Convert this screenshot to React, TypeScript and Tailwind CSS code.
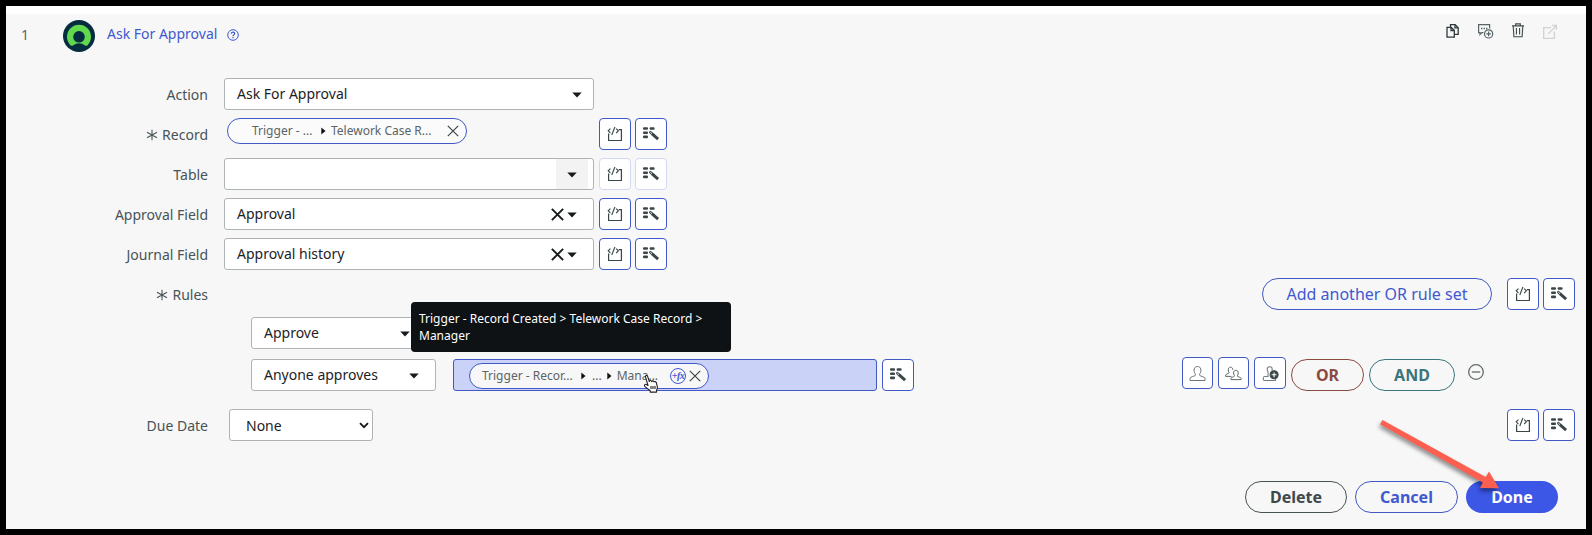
import React from "react";

function ScriptIcon() {
  return (
    <svg width="16" height="16" viewBox="0 0 16 16" fill="none" stroke="#3b4648" strokeWidth="1.2">
      <path d="M1.6 7.500v7h12.800V3.600h-2.600" />
      <path d="M3.400 2.600 1.200 4.800l2.200 2.200M9.200 2.600l2.200 2.200-2.200 2.200M7.900 1 4.800 9" strokeWidth="1.1" />
    </svg>
  );
}

function WandIcon() {
  return (
    <svg width="18" height="16" viewBox="0 0 18 16" fill="#3b4648">
      <rect x="1" y="1.2" width="5" height="2.6" rx="1" />
      <rect x="7.6" y="1.2" width="5" height="2.6" rx="1" />
      <rect x="1" y="5.4" width="5" height="2.6" rx="1" />
      <rect x="1" y="9.6" width="5" height="2.6" rx="1" />
      <path d="m9.900 7.600 6.200 5.600" stroke="#3b4648" strokeWidth="3" />
      <path d="m8.400 6.200 1.400 1.300" stroke="#3b4648" strokeWidth="2.6" strokeLinecap="round" />
      <path d="m8.700 6.500.9.8" stroke="#fff" strokeWidth="1" strokeLinecap="round" />
    </svg>
  );
}

function Square({ children, muted = false, w = "w-8" }: { children: React.ReactNode; muted?: boolean; w?: string }) {
  return (
    <button
      className={`flex h-8 shrink-0 items-center justify-center rounded-[4px] border bg-white ${w} ${
        muted ? "border-[#d3d8f6]" : "border-[#4059c4]"
      }`}
    >
      {children}
    </button>
  );
}

function Pair({ muted = false }: { muted?: boolean }) {
  return (
    <div className="flex gap-1">
      <Square muted={muted}><ScriptIcon /></Square>
      <Square muted={muted}><WandIcon /></Square>
    </div>
  );
}

function Caret() {
  return (
    <svg width="10" height="6" viewBox="0 0 10 6" className="mt-[2px] shrink-0"><path d="M.3.5h9.400L5 5.600z" fill="#161b1c" /></svg>
  );
}

function RightCaret() {
  return (
    <svg width="5" height="8" viewBox="0 0 5 8" className="shrink-0"><path d="M.3.6 4.500 4 .3 7.400z" fill="#111" /></svg>
  );
}

function Cross({ bold = false }: { bold?: boolean }) {
  return (
    <svg width={bold ? 13 : 12} height={bold ? 13 : 12} viewBox="0 0 12 12" className="shrink-0" stroke={bold ? "#161b1c" : "#3b4648"} strokeWidth={bold ? 1.8 : 1.2}>
      <path d="m.8.8 10.400 10.400M11.200.8.8 11.200" />
    </svg>
  );
}

function Label({ children, required = false }: { children: React.ReactNode; required?: boolean }) {
  return (
    <div className="mr-4 flex h-8 w-[202px] shrink-0 items-center justify-end gap-1 pt-[2px] text-[#485356]">
      {required && (
        <svg width="12" height="12" viewBox="0 0 12 12" stroke="#485356" strokeWidth="1.1">
          <path d="M6 .8v10.400M1 3.200l10 5.600M11 3.200 1 8.800" />
        </svg>
      )}
      <span>{children}</span>
    </div>
  );
}

function Field({ children, className }: { children: React.ReactNode; className: string }) {
  return (
    <div className={`flex h-8 shrink-0 items-center rounded-[3px] border border-[#aeb4b5] bg-white pl-3 text-[#1d2324] ${className}`}>
      {children}
    </div>
  );
}

function Clearable({ label, value }: { label: string; value: string }) {
  return (
    <div className="flex h-8">
      <Label>{label}</Label>
      <Field className="mr-[5px] w-[370px] pr-[16px]">
        <span className="flex-1">{value}</span>
        <Cross bold />
        <span className="w-[3px]" />
        <Caret />
      </Field>
      <Pair />
    </div>
  );
}

function Header() {
  return (
    <header className="flex h-[64px] items-start pl-[15px] text-[#4059d0]">
      <span className="mt-[11px] w-[42px] text-[#5a6466]">1</span>
      <svg width="32" height="32" viewBox="0 0 32 32" className="mt-[6px]">
        <circle cx="16" cy="16" r="16" fill="#062c40" />
        <path d="M7.400 25.200a12 12 0 1 1 17.200 0c-.8.8-2 .8-2.900.1a9.200 9.200 0 0 0-11.400 0c-.9.7-2.100.7-2.900-.1z" fill="#62d84e" />
        <circle cx="16" cy="16.800" r="5.800" fill="#062c40" />
      </svg>
      <span className="ml-3 mt-[10px]">Ask For Approval</span>
      <svg width="12" height="12" viewBox="0 0 12 12" className="ml-[10px] mt-[15px]" fill="none" stroke="#4059d0" strokeWidth="1">
        <circle cx="6" cy="6" r="5.300" />
        <path d="M4.400 4.800c0-2.400 3.300-2.100 3.300-.2C7.700 5.800 6 5.700 6 7.200M6 8.100v1.200" strokeWidth="1.2" />
      </svg>
      <div className="ml-auto flex pr-[28px] pt-[9px]">
        <svg width="16" height="16" viewBox="0 0 16 16" className="mr-4" fill="none" stroke="#2f393b" strokeWidth="1.3">
          <path d="M5.500 4.200V1.700h4.700l3 3v6.700H9.800" />
          <path d="M2 4.300h4.300l3 3v6.900H2zM6 4.500v3h3M10 1.900v3h3" />
        </svg>
        <svg width="17" height="17" viewBox="0 0 17 17" className="mr-[17px]" fill="none" stroke="#586365" strokeWidth="1.2">
          <path d="M6.400 9.600H4.800L3 11.500V9.600H1.600V1.700h11v3.800" />
          <path d="M4 5.500h1.400M6.500 5.500h1.400M9 5.500h1.400" strokeWidth="1.500" />
          <circle cx="11.600" cy="10.900" r="4.100" />
          <path d="M9.300 10.900h4.600M11.600 8.600v4.600" />
        </svg>
        <svg width="14" height="16" viewBox="0 0 14 16" className="mr-[17px]" fill="none" stroke="#3f494b" strokeWidth="1.100">
          <path d="M1 2.900h12M4.700 2.600V.900h4.600v1.700M2.200 3.300l.7 10.400h8.200l.7-10.400M5.400 5v6.600M8.600 5v6.600" />
        </svg>
        <svg width="16" height="16" viewBox="0 0 16 16" className="mt-[1px]" fill="none" stroke="#d0d3d3" strokeWidth="1.300">
          <path d="M9 3.600H1.700v10.800h10.700V7.600M6 10.100 14 2M10.200 1.500h4.200v4.200" />
        </svg>
      </div>
    </header>
  );
}

function Person() {
  return (
    <svg width="17" height="17" viewBox="0 0 17 17" fill="none" stroke="#6d7779" strokeWidth="1">
      <path d="M1 15.500v-2.300c0-1.300 4.500-1.900 5.300-2.800.5-.6 0-1.500-.6-2.500C4.600 6.100 4.600 1.500 8.500 1.500s3.900 4.600 2.800 6.400c-.6 1-1.100 1.900-.6 2.500.8.900 5.300 1.500 5.300 2.800v2.300z" />
    </svg>
  );
}

function People() {
  return (
    <svg width="17" height="15" viewBox="0 0 17 15" fill="none" stroke="#5c6668" strokeWidth="1">
      <path d="M6.500 10.400H.7V8.900c0-.7 3-1.100 3.300-1.800.3-.6-.7-1.200-.7-3.200C3.300 2.200 4 1.200 5.500 1.200s2.300 1 2.300 2.600" />
      <path d="M6 13.600v-1.400c0-.8 3-1.300 3.400-2 .3-.6-.8-1.400-.8-3.200 0-1.700.8-2.700 2.300-2.700s2.300 1 2.300 2.700c0 1.800-1.100 2.600-.8 3.200.4.700 3.700 1.200 3.700 2v1.400z" />
    </svg>
  );
}

function Stamp() {
  return (
    <svg width="17" height="17" viewBox="0 0 17 17" fill="none" stroke="#747d7f" strokeWidth="1.100">
      <path d="M13.500 13.500v2H2.200c-1.300 0-1.300-4 .3-4H6V6.800c0-.8-.8-1.300-.8-2.700 0-3.200 5-3.200 5 0 0 .7-.2 1.200-.4 1.600" />
      <circle cx="12.100" cy="9.800" r="4" fill="#3b4648" stroke="#3b4648" />
      <path d="M9.700 9.800h4.800M12.100 7.400v4.800" stroke="#fff" />
    </svg>
  );
}

function HandCursor() {
  return (
    <svg width="16" height="18" viewBox="0 0 16 18" className="absolute left-[173px] top-[11px]" fill="#fff" stroke="#222" strokeWidth="1.100" strokeLinejoin="round">
      <path d="M5 10.500 2.500 1.900C2 .3 4.200-.1 4.700 1.600L6.300 6.500c.3-1.400 2-1.400 2.400.1.500-1.100 2-.9 2.300.4.700-.8 2-.5 2.300.7l1 4c.4 1.600-.3 2.600-.8 3.600v1.800H7.200v-1.300L2 11.600C.5 10 2.500 8.600 3.700 9.700z" />
      <path d="M8 11v3M10 11v3M12 11v3" fill="none" />
    </svg>
  );
}

function Arrow() {
  return (
    <svg width="150" height="90" viewBox="0 0 150 90" className="pointer-events-none absolute left-[1370px] top-[410px]">
      <path
        d="M12.500 10 115.800 67 119 61.500 129 78.300 110 78 112.800 72.500 10 14.200z"
        fill="#fa5f50"
        className="drop-shadow-[-1px_3px_2px_rgba(0,0,0,0.45)]"
      />
    </svg>
  );
}

export default function App() {
  return (
    <div className="relative h-[535px] w-[1592px] overflow-hidden bg-black pl-[6px] pr-[6px] pt-[6px] font-['Noto_Sans',sans-serif] text-[14px] leading-5">
      <main className="h-[523px] overflow-hidden bg-[#f7f7f7]">
        <div className="h-2 bg-white" />
        <Header />
        <div className="flex flex-col gap-2">
          <div className="flex h-8">
            <Label>Action</Label>
            <Field className="w-[370px] justify-between pr-[11px]"><span>Ask For Approval</span><Caret /></Field>
          </div>
          <div className="flex h-8">
            <Label required>Record</Label>
            <div className="ml-[3px] mr-[132px] flex h-[26px] w-[240px] items-center rounded-full border border-[#4059c4] bg-[#fbfbfb] pl-6 pr-[7px] text-[12px] text-[#5a6466]">
              <span className="mr-[9px] w-[60px] whitespace-nowrap">Trigger - ...</span>
              <RightCaret />
              <span className="ml-[5px] flex-1 whitespace-nowrap">Telework Case R...</span>
              <Cross />
            </div>
            <Pair />
          </div>
          <div className="flex h-8">
            <Label>Table</Label>
            <Field className="mr-[5px] w-[370px] justify-end pr-[5px]">
              <span className="flex h-full w-8 items-center justify-center bg-[#f3f3f3]"><Caret /></span>
            </Field>
            <Pair muted />
          </div>
          <Clearable label="Approval Field" value="Approval" />
          <Clearable label="Journal Field" value="Approval history" />
          <div className="flex h-8 pr-[11px]">
            <Label required>Rules</Label>
            <button className="ml-auto mr-[15px] h-8 w-[230px] rounded-full border border-[#4059c4] text-[16px] text-[#4059d0]">Add another OR rule set</button>
            <Pair />
          </div>
        </div>

        <div className="relative mt-[7px] flex h-8 pl-[245px]">
          <Field className="w-[185px] justify-between pr-[25px]"><span>Approve</span><Caret /></Field>
          <div className="absolute left-[405px] top-[-15px] z-10 h-[50px] w-[320px] rounded-[4px] bg-[#0e1215] px-2 py-[8px] text-[12px] leading-[17px] text-white">
            Trigger - Record Created &gt; Telework Case Record &gt; Manager
          </div>
        </div>

        <div className="mt-[8px] flex h-[34px] items-start pl-[245px] pt-[2px]">
          <Field className="w-[185px] justify-between pr-[16px]"><span>Anyone approves</span><Caret /></Field>
          <div className="ml-[17px] mr-[5px] flex h-8 w-[424px] items-center rounded-[3px] border border-[#4059c4] bg-[#cbd2f7] pl-[15px]">
            <div className="relative mt-[2px] flex h-[26px] w-[240px] items-center rounded-full border border-[#4059c4] bg-[#f7f7f7] pl-3 pr-[7px] text-[12px] text-[#5a6466]">
              <span className="mr-[7px] w-[92px] whitespace-nowrap">Trigger - Recor...</span>
              <RightCaret />
              <span className="ml-[6px] mr-[5px]">...</span>
              <RightCaret />
              <span className="ml-[5px] flex-1 whitespace-nowrap">Mana...</span>
              <span className="mr-[3px] flex size-[16px] shrink-0 items-center justify-center rounded-full border border-[#4059d0] font-['Liberation_Serif',serif] text-[10px] font-semibold italic leading-none tracking-tighter text-[#4059d0]">+fx</span>
              <Cross />
              <HandCursor />
            </div>
          </div>
          <Square><WandIcon /></Square>
          <div className="-mt-[2px] ml-auto flex gap-[5px] pr-[5px]">
            <Square w="w-[31px]"><Person /></Square>
            <Square w="w-[31px]"><People /></Square>
            <Square><Stamp /></Square>
          </div>
          <button className="mr-[5px] h-8 w-[73px] rounded-full border border-[#8c4a3f] text-[16px] font-bold text-[#8c4a3f]">OR</button>
          <button className="h-8 w-[86px] rounded-full border border-[#3a767c] text-[16px] font-bold text-[#3a767c]">AND</button>
          <svg width="16" height="16" viewBox="0 0 16 16" className="ml-[13px] mr-[102px] mt-[5px]" fill="none" stroke="#626b6d" strokeWidth="1.300">
            <circle cx="8" cy="8" r="7.300" /><path d="M3.800 8h8.400" />
          </svg>
        </div>

        <div className="mt-[18px] flex h-8 pr-[11px]">
          <Label>Due Date</Label>
          <Field className="ml-[5px] w-[144px] justify-between pl-4 pr-[3px]">
            <span className="pt-[2px]">None</span>
            <svg width="10" height="7" viewBox="0 0 10 7" fill="none" stroke="#161b1c" strokeWidth="1.900"><path d="m1 1.200 4 4 4-4" /></svg>
          </Field>
          <div className="ml-auto"><Pair /></div>
        </div>

        <div className="mt-[40px] flex justify-end gap-2 pr-[28px] text-[16px] font-bold">
          <button className="h-8 w-[102px] rounded-full border border-[#485356] text-[#3f494b]">Delete</button>
          <button className="h-8 w-[103px] rounded-full border border-[#4059c4] text-[#4059d0]">Cancel</button>
          <button className="h-8 w-[92px] rounded-full bg-[#3c56e6] text-white">Done</button>
        </div>
      </main>
      <Arrow />
    </div>
  );
}
